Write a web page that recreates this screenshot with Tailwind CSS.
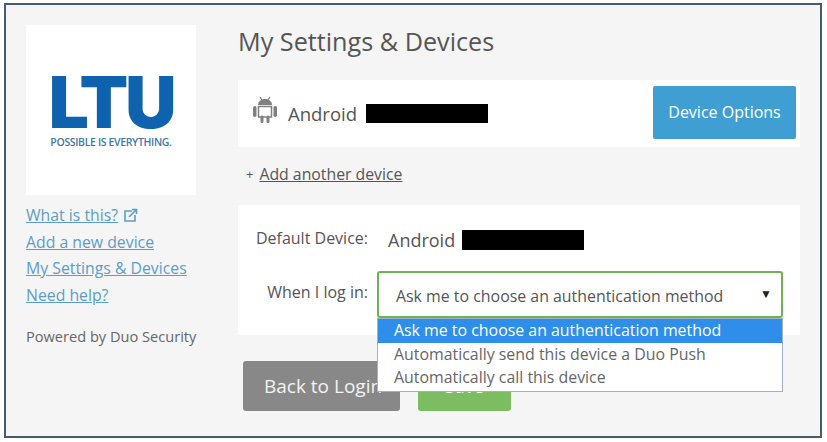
<!DOCTYPE html>
<html lang="en">
<head>
    <meta charset="UTF-8">
    <meta name="viewport" content="width=device-width, initial-scale=1.0">
    <title>My Settings &amp; Devices</title>
    <script src="https://cdn.jsdelivr.net/npm/@tailwindcss/browser@4"></script>
</head>
<body class="bg-white font-['Open_Sans',sans-serif] text-[#555] overflow-hidden">
    <div class="ml-[4px] mt-[3px] w-[818px] h-[435px] border-2 border-[#4b5a68] bg-[#f5f5f6] flex pl-[20px] pt-[20px]">
        <!-- sidebar -->
        <div class="w-[170px] mr-[42px] shrink-0">
            <div class="w-[170px] h-[170px] bg-white flex flex-col items-center pt-[46px]">
                <div class="font-['Inter',sans-serif] font-black text-[71px] leading-[62px] tracking-[-3.200px] text-[#0f62ae]">LTU</div>
                <div class="mt-[2px] font-['Open_Sans',sans-serif] font-semibold text-[10.500px] leading-[14px] tracking-[-0.350px] text-[#3f78a8]">POSSIBLE IS EVERYTHING.</div>
            </div>
            <div class="mt-[7px] flex flex-col text-[15.800px] leading-[26.500px] text-[#5c9dc6] whitespace-nowrap">
                <div class="flex items-center gap-[5px]">
                    <a href="#" class="underline">What is this?</a>
                    <svg width="15" height="15" viewBox="0 0 15 15" fill="none" stroke="#5c9dc6" stroke-width="1.6"><path d="M9 3H2v10h10V7"/><path d="M6 9l7-7M9 1.500h4.500V6"/></svg>
                </div>
                <a href="#" class="underline">Add a new device</a>
                <a href="#" class="underline">My Settings &amp; Devices</a>
                <a href="#" class="underline">Need help?</a>
                <div class="mt-[15px] text-[14.600px] text-[#666]">Powered by Duo Security</div>
            </div>
        </div>
        <!-- main -->
        <div class="w-[562px]">
            <h1 class="text-[25.200px] leading-[33px] text-[#555]">My Settings &amp; Devices</h1>
            <div class="mt-[22px] h-[67px] bg-white flex items-center pl-[15px] pr-[4px]">
                <svg width="24" height="27" viewBox="0 0 24 27" class="mb-[8px]">
                    <path d="M7 1l2 3M17 1l-2 3" stroke="#808080" stroke-width="1.300" fill="none"/>
                    <path d="M5 9c0-3.500 3-6 7-6s7 2.500 7 6z" fill="#808080"/>
                    <rect x="0" y="10" width="3.500" height="11" rx="1.700" fill="#808080"/>
                    <rect x="20.500" y="10" width="3.500" height="11" rx="1.700" fill="#808080"/>
                    <path d="M5.500 10.500h13V21h-13z" fill="#fff" stroke="#808080" stroke-width="1.500"/>
                    <path d="M9 21v4.500M15 21v4.500" stroke="#808080" stroke-width="3" stroke-linecap="round"/>
                </svg>
                <span class="ml-[11px] text-[18.500px]">Android</span>
                <span class="ml-[9px] w-[122px] h-[19px] bg-black"></span>
                <button class="ml-auto mb-[2px] w-[143px] h-[53px] bg-[#3f9fd3] rounded-[2px] text-white text-[16px] pb-[2px]">Device Options</button>
            </div>
            <div class="h-[58px] flex items-center pl-[8px] pb-[3px] text-[15.800px]">
                <span class="text-[13px] mr-[6px]">+</span><a href="#" class="underline">Add another device</a>
            </div>
            <div class="h-[130px] bg-white relative pt-[21px]">
                <div class="flex items-center h-[24px]">
                    <span class="w-[130px] text-right text-[16px]">Default Device:</span>
                    <span class="ml-[20px] text-[18px] mt-[4px]">Android</span>
                    <span class="ml-[7px] w-[122px] h-[20px] bg-black mt-[4px]"></span>
                </div>
                <div class="flex mt-[21px]">
                    <span class="w-[130px] text-right text-[16px] leading-[42px]">When I log in:</span>
                    <div class="ml-[9px] w-[406px] relative">
                        <div class="h-[47px] border-2 border-[#6cb452] rounded-[3px] bg-white flex items-center justify-between pl-[17px] pr-[9px] pt-[4px] text-[15.900px]">
                            <span>Ask me to choose an authentication method</span>
                            <span class="text-[12px] text-[#222] mb-[6px]">▼</span>
                        </div>
                        <div class="absolute z-10 left-0 top-[47px] w-[406px] h-[74px] bg-white border border-[#9fb2cc] text-[15.900px] leading-[23.500px] whitespace-nowrap">
                            <div class="bg-[#2e8eea] text-white pl-[16px]">Ask me to choose an authentication method</div>
                            <div class="pl-[16px] text-[#666]">Automatically send this device a Duo Push</div>
                            <div class="pl-[16px] text-[#666]">Automatically call this device</div>
                        </div>
                    </div>
                </div>
            </div>
            <div class="mt-[26px] ml-[5px] flex gap-[18px]">
                <button class="w-[157px] h-[50px] bg-[#888] rounded-[3px] text-[#f3f3f3] text-[19px]"><span class="block text-left pl-[21px] whitespace-nowrap overflow-hidden">Back to Login</span></button>
                <button class="w-[93px] h-[50px] bg-[#7dbd61] rounded-[3px] text-white text-[18px]">Save</button>
            </div>
        </div>
    </div>
</body>
</html>
